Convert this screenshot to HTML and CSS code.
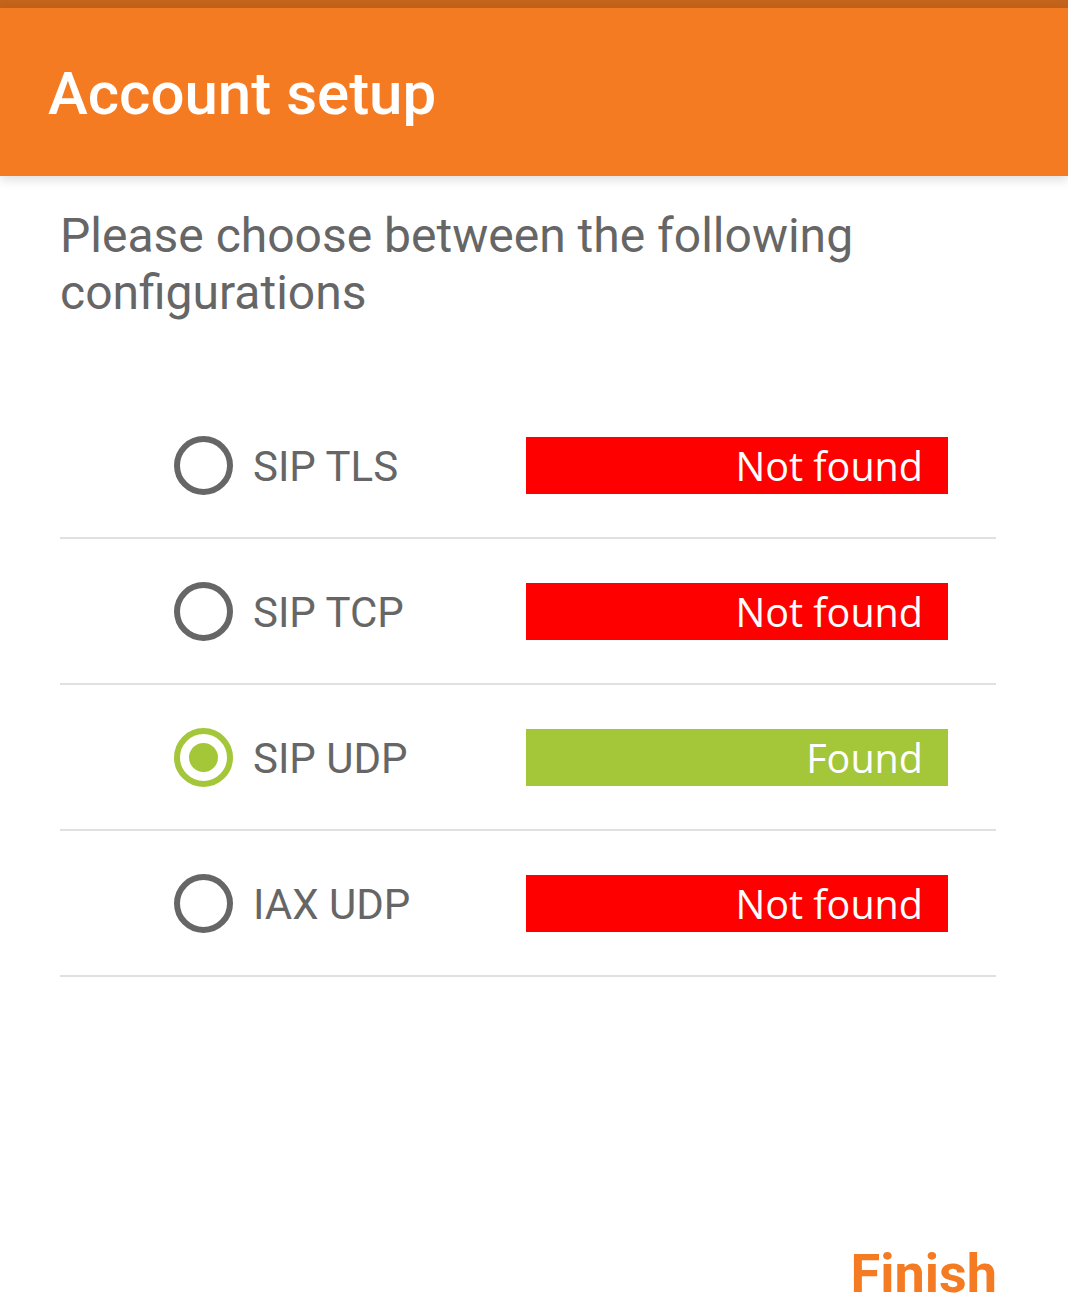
FILE: index.html
```html
<!DOCTYPE html>
<html>
<head>
<meta charset="utf-8">
<link rel="stylesheet" href="styles.css">
</head>
<body>
<div class="statusbar"></div>
<header class="toolbar"><h1 class="title">Account setup</h1></header>
<main class="content">
  <p class="intro">Please choose between the following configurations</p>
  <div class="list">
    <div class="row">
      <span class="radio"></span>
      <span class="label">SIP TLS</span>
      <span class="status status-bad">Not found</span>
    </div>
    <div class="row">
      <span class="radio"></span>
      <span class="label">SIP TCP</span>
      <span class="status status-bad">Not found</span>
    </div>
    <div class="row">
      <span class="radio radio-on"></span>
      <span class="label">SIP UDP</span>
      <span class="status status-ok">Found</span>
    </div>
    <div class="row">
      <span class="radio"></span>
      <span class="label">IAX UDP</span>
      <span class="status status-bad">Not found</span>
    </div>
  </div>
  <div class="footer"><span class="finish">Finish</span></div>
</main>
</body>
</html>
```
FILE: styles.css
```css
html, body {
  margin: 0;
  padding: 0;
  background: #fff;
  font-family: Roboto, "Liberation Sans", sans-serif;
  width: 1068px;
  height: 1312px;
  overflow: hidden;
}
.statusbar {
  height: 8px;
  background: #c4631b;
}
.toolbar {
  height: 168px;
  background: #f47b22;
  display: flex;
  align-items: center;
  padding: 4px 0 0 48px;
  box-sizing: border-box;
  box-shadow: 0 4px 10px rgba(0,0,0,0.13);
  position: relative;
}
.title {
  margin: 0;
  color: #fff;
  font-size: 60px;
  font-weight: 500;
  line-height: 70px;
}
.content {
  padding: 0 72px 0 60px;
}
.intro {
  margin: 31px 0 0 0;
  color: #666;
  font-size: 48px;
  line-height: 57px;
  max-width: 820px;
}
.list {
  margin-top: 72px;
  width: 936px;
}
.row {
  height: 144px;
  border-bottom: 2px solid #e0e0e0;
  display: flex;
  align-items: center;
  padding-left: 114px;
}
.radio {
  width: 59px;
  height: 59px;
  box-sizing: border-box;
  border: 6px solid #666;
  border-radius: 50%;
  display: flex;
  align-items: center;
  justify-content: center;
  flex: none;
}
.radio-on {
  border-color: #a4c639;
}
.radio-on::after {
  content: "";
  width: 29px;
  height: 29px;
  border-radius: 50%;
  background: #a4c639;
}
.label {
  flex: 1;
  margin-left: 20px;
  padding-top: 4px;
  color: #666;
  font-size: 42px;
  line-height: 50px;
}
.status {
  width: 422px;
  height: 57px;
  margin-right: 48px;
  box-sizing: border-box;
  padding-right: 25px;
  text-align: right;
  color: #fff;
  font-family: "Open Sans", "Noto Sans", sans-serif;
  font-size: 39.5px;
  line-height: 59px;
}
.status-bad { background: #ff0000; }
.status-ok { background: #a4c639; }
.footer {
  margin-top: 265px;
  display: flex;
  justify-content: flex-end;
  width: 937px;
}
.finish {
  color: #f47b22;
  font-size: 54px;
  font-weight: 700;
  line-height: 64px;
}
```
